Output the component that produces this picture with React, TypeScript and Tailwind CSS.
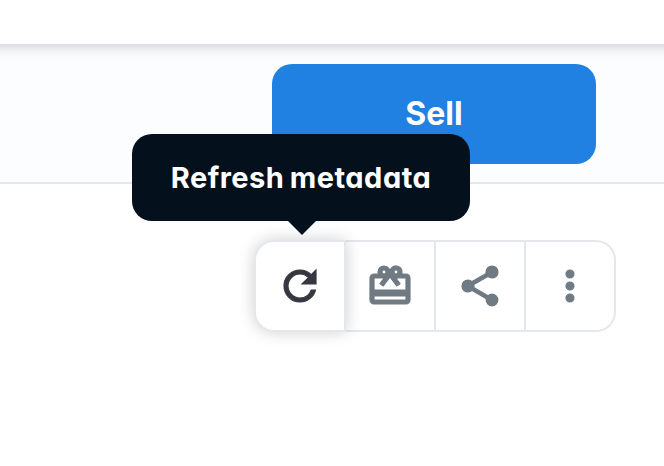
import React from 'react';
import { MdMoreVert, MdRedeem, MdRefresh, MdShare } from 'react-icons/md';

interface ToolbarAction {
    label: string;
    icon: React.ReactNode;
}

// Only the glyph path gets the extra weight, not the icon's bounding path
const iconStyle = 'size-12 [&>path:last-child]:[stroke-width:0.6px]';

const actions: ToolbarAction[] = [
    { label: 'Transfer', icon: <MdRedeem className={iconStyle} /> },
    { label: 'Share', icon: <MdShare className={iconStyle} /> },
    { label: 'More', icon: <MdMoreVert className={iconStyle} /> }
];

const Tooltip: React.FC<{ text: string }> = ({ text }) => (
    <div
        role="tooltip"
        className="absolute -top-[106px] -left-[122px] z-20 flex h-[87px] w-[338px] items-center justify-center rounded-[20px] bg-[#04111d] text-white"
    >
        <span className="whitespace-nowrap text-[29px] leading-none font-bold tracking-[0.5px] [font-feature-settings:'cv11'] [word-spacing:-2px]">
            {text}
        </span>
        {/* Arrow */}
        <svg className="absolute top-[86px] left-[155px]" width="30" height="16" viewBox="0 0 30 16">
            <path d="M0 0h30L15 15z" fill="#04111d" />
        </svg>
    </div>
);

const Toolbar: React.FC = () => (
    <div className="mt-14 ml-[254px] flex h-[92px] w-[362px] rounded-[20px] text-[#707a83]">
        <div className="relative z-10 w-[92px] shrink-0">
            <button
                type="button"
                aria-label="Refresh metadata"
                className="flex h-full w-full items-center justify-center rounded-l-[20px] border-2 border-[#e5e8eb] bg-white text-[#353840] shadow-[0_0_16px_rgba(4,17,29,0.2)]"
            >
                <MdRefresh className={iconStyle} />
            </button>
            <Tooltip text="Refresh metadata" />
        </div>
        {actions.map(({ label, icon }) => (
            <button
                key={label}
                type="button"
                aria-label={label}
                className="flex w-[90px] shrink-0 items-center justify-center border-y-2 border-r-2 border-[#e5e8eb] bg-white last:rounded-r-[20px]"
            >
                {icon}
            </button>
        ))}
    </div>
);

const App: React.FC = () => {
    return (
        <div className="h-[466px] w-[664px] overflow-hidden bg-white font-['Inter','Open_Sans',sans-serif]">
            <div className="relative -mx-6 h-11 bg-white shadow-[0_0_16px_rgba(4,17,29,0.25)]" />
            <div className="h-[140px] border-b-2 border-[#e5e8eb] bg-[#fbfdff] pt-5 pl-[272px]">
                <button
                    type="button"
                    className="flex h-[100px] w-[324px] items-center justify-center rounded-[20px] bg-[#2081e2] text-[32px] font-bold text-white"
                >
                    Sell
                </button>
            </div>
            <Toolbar />
        </div>
    );
};

export default App;
